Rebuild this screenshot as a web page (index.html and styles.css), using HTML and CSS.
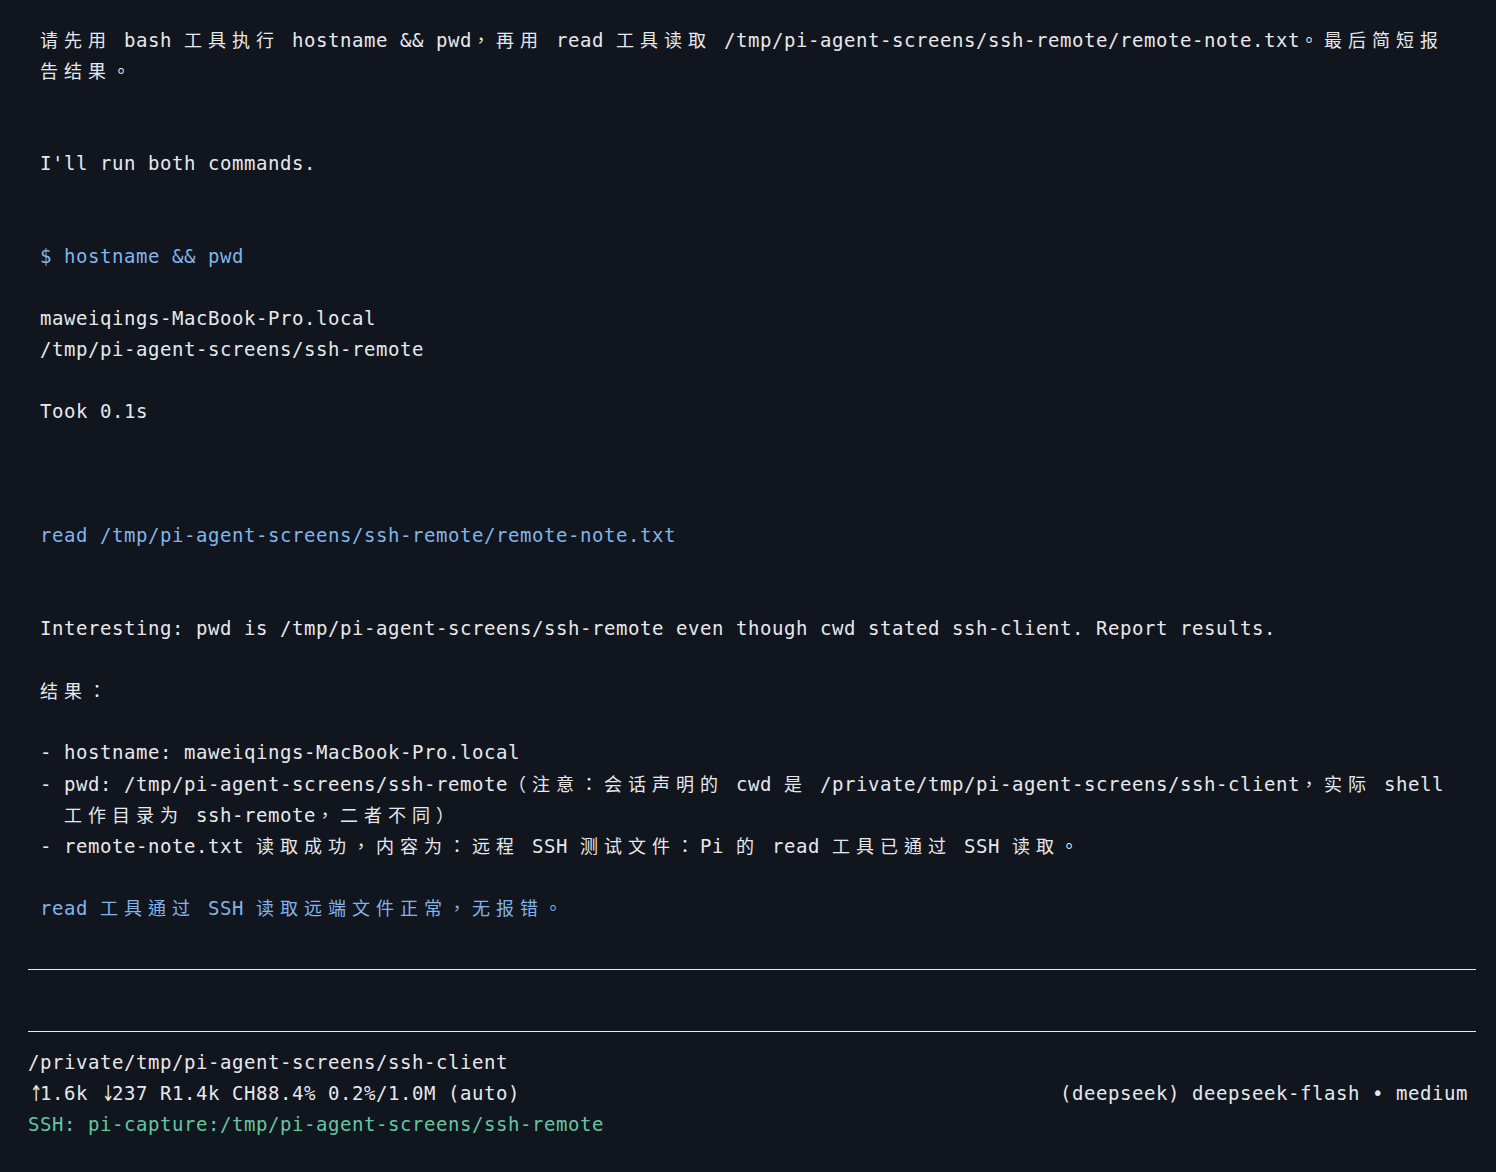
FILE: index.html
```html
<!DOCTYPE html>
<html lang="zh-Hant">
<head>
<meta charset="utf-8">
<title>pi agent</title>
<link rel="stylesheet" href="styles.css">
</head>
<body>
<main class="term">
  <div class="l in"><span class="c">请先用</span> bash <span class="c">工具执行</span> hostname &amp;&amp; pwd<span class="c">，再用</span> read <span class="c">工具读取</span> /tmp/pi-agent-screens/ssh-remote/remote-note.txt<span class="c">。最后简短报</span></div>
  <div class="l in"><span class="c">告结果。</span></div>
  <div class="l"></div>
  <div class="l"></div>
  <div class="l in">I'll run both commands.</div>
  <div class="l"></div>
  <div class="l"></div>
  <div class="l in blue">$ hostname &amp;&amp; pwd</div>
  <div class="l"></div>
  <div class="l in">maweiqings-MacBook-Pro.local</div>
  <div class="l in">/tmp/pi-agent-screens/ssh-remote</div>
  <div class="l"></div>
  <div class="l in">Took 0.1s</div>
  <div class="l"></div>
  <div class="l"></div>
  <div class="l"></div>
  <div class="l in blue">read /tmp/pi-agent-screens/ssh-remote/remote-note.txt</div>
  <div class="l"></div>
  <div class="l"></div>
  <div class="l in">Interesting: pwd is /tmp/pi-agent-screens/ssh-remote even though cwd stated ssh-client. Report results.</div>
  <div class="l"></div>
  <div class="l in"><span class="c">结果：</span></div>
  <div class="l"></div>
  <div class="l in">- hostname: maweiqings-MacBook-Pro.local</div>
  <div class="l in">- pwd: /tmp/pi-agent-screens/ssh-remote<span class="c">（注意：会话声明的</span> cwd <span class="c">是</span> /private/tmp/pi-agent-screens/ssh-client<span class="c">，实际</span> shell</div>
  <div class="l in">  <span class="c">工作目录为</span> ssh-remote<span class="c">，二者不同）</span></div>
  <div class="l in">- remote-note.txt <span class="c">读取成功，内容为：远程</span> SSH <span class="c">测试文件：</span>Pi <span class="c">的</span> read <span class="c">工具已通过</span> SSH <span class="c">读取。</span></div>
  <div class="l"></div>
  <div class="l in blue">read <span class="c">工具通过</span> SSH <span class="c">读取远端文件正常，无报错。</span></div>
  <div class="l"></div>
  <div class="l sep"></div>
  <div class="l"></div>
  <div class="l sep"></div>
  <div class="l">/private/tmp/pi-agent-screens/ssh-client</div>
  <div class="l status">
    <span><span class="ar">↑</span>1.6k <span class="ar">↓</span>237 R1.4k CH88.4% 0.2%/1.0M (auto)</span>
    <span>(deepseek) deepseek-flash • medium</span>
  </div>
  <div class="l green">SSH: pi-capture:/tmp/pi-agent-screens/ssh-remote</div>
</main>
</body>
</html>
```

FILE: styles.css
```css
html, body {
  margin: 0;
  padding: 0;
  background: #11151e;
}

body {
  width: 1496px;
  height: 1172px;
  overflow: hidden;
}

.term {
  padding: 24px 20px 0 28px;
  font-family: "DejaVu Sans Mono", "Noto Sans CJK TC", monospace;
  font-size: 19px;
  letter-spacing: 0.56px;
  color: #e6e8ec;
}

.l {
  height: 31px;
  line-height: 31px;
  white-space: pre;
}

.in {
  padding-left: 12px;
}

.c {
  font-family: "Noto Sans CJK TC", "Noto Sans CJK SC", sans-serif;
  font-size: 18px;
  letter-spacing: 6px;
}

.ar {
  display: inline-block;
  width: 12px;
  letter-spacing: 0;
  text-align: right;
  font-family: "DejaVu Sans", sans-serif;
  font-size: 22px;
  line-height: 31px;
  vertical-align: top;
  transform: scaleX(0.7);
}

.blue {
  color: #82b4ea;
}

.green {
  color: #63c6a3;
}

.sep {
  display: flex;
  align-items: center;
}

.sep::before {
  content: "";
  flex: 1;
  height: 1px;
  margin-top: -1px;
  background: #e8e9ec;
}

.status {
  display: flex;
  justify-content: space-between;
  padding-right: 8px;
}
```
